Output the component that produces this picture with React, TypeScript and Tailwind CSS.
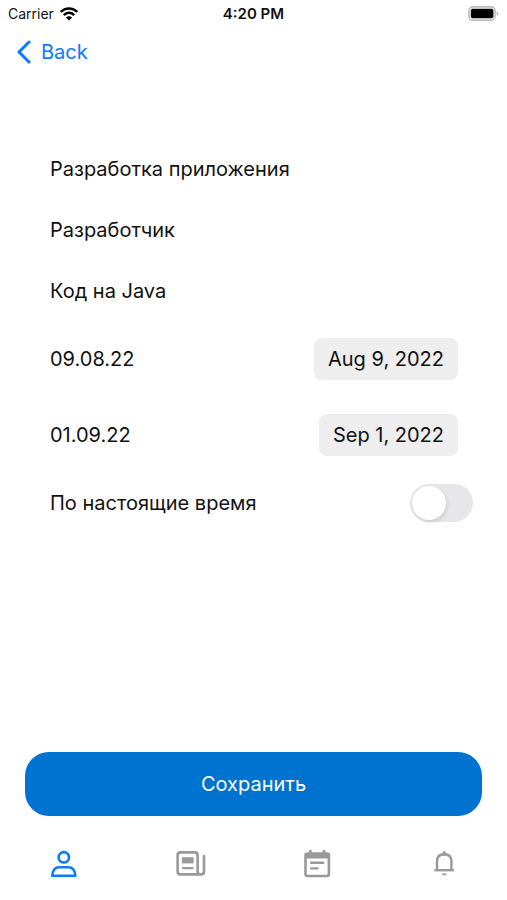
import { useState } from 'react'

type TabId = 'profile' | 'news' | 'calendar' | 'alerts'

interface TextFieldProps {
  label: string
  value: string
  onChange: (value: string) => void
}

interface DateRowProps {
  id: string
  value: string
  pickerLabel: string
}

const tabs: { id: TabId; label: string }[] = [
  { id: 'profile', label: 'Профиль' },
  { id: 'news', label: 'Новости' },
  { id: 'calendar', label: 'Календарь' },
  { id: 'alerts', label: 'Уведомления' },
]

function WifiIcon() {
  return (
    <svg width="18" height="14" viewBox="0 0 18 14" fill="none" stroke="#000" strokeWidth="2.5" aria-hidden="true">
      <path d="M0.8 4.9C5.2 0.2 12.8 0.2 17.2 4.9" />
      <path d="M3.8 8.1C6.6 5.1 11.4 5.1 14.2 8.1" />
      <path d="M9 13.6L5.9 10.5C7.6 8.8 10.4 8.8 12.1 10.5Z" fill="#000" stroke="none" />
    </svg>
  )
}

function BatteryIcon() {
  return (
    <svg width="31" height="15" viewBox="0 0 31 15" aria-hidden="true">
      <rect x="0.9" y="0.9" width="26.2" height="13.2" rx="4" fill="#fff" stroke="#bdbdbd" strokeWidth="1.6" />
      <rect x="2.8" y="2.8" width="22.6" height="9.4" rx="1.8" fill="#000" />
      <path d="M28.7 5.2C30.9 6 30.9 9 28.7 9.8Z" fill="#bdbdbd" />
    </svg>
  )
}

function TabIcon({ id }: { id: TabId }) {
  const common = {
    width: 32,
    height: 32,
    viewBox: '0 0 32 32',
    fill: 'none',
    stroke: 'currentColor',
    strokeWidth: 2.6,
    'aria-hidden': true,
  } as const

  switch (id) {
    case 'profile':
      return (
        <svg {...common} strokeLinejoin="round">
          <circle cx="16.8" cy="9.3" r="5.2" />
          <path d="M5.2 27.7C5.8 21.6 8 19.2 12 19.2H21.6C25.6 19.2 27.8 21.6 28.4 27.7Z" />
        </svg>
      )
    case 'news':
      return (
        <svg {...common} strokeLinejoin="round" strokeLinecap="round">
          <path d="M27 26.4H6.4C4.4 26.4 3.6 25.6 3.6 23.6V7.2C3.6 5.2 4.4 4.4 6.4 4.4H20.8C22.8 4.4 23.6 5.2 23.6 7.2V23.4C23.6 25.4 24.8 26.4 26.8 26.4C29 26.4 30 25.4 30 23.4V8" />
          <rect x="8" y="9.2" width="11.6" height="6.2" fill="currentColor" stroke="none" />
          <path d="M9 20.2H18.6" strokeWidth="2.2" />
        </svg>
      )
    case 'calendar':
      return (
        <svg {...common}>
          <rect x="4.5" y="5.6" width="23.4" height="22.4" rx="2" />
          <path d="M4 8H28.4" strokeWidth="5" />
          <path d="M9.4 2V6M23 2V6" />
          <path d="M9.2 14.8H23.2M9.2 20.4H17.6" strokeWidth="2.4" />
        </svg>
      )
    case 'alerts':
      return (
        <svg {...common} strokeWidth="2.4">
          <path d="M6.4 22.2H26" />
          <path d="M9 22.2V13.4C9 8.6 12 6.2 16.2 6.2C20.4 6.2 23.4 8.6 23.4 13.4V22.2" />
          <path d="M16.2 4.4V6.2" strokeWidth="3" strokeLinecap="round" />
          <path d="M13.6 25.6H18.8C18.2 28 14.2 28 13.6 25.6Z" fill="currentColor" stroke="none" />
        </svg>
      )
  }
}

function TextField({ label, value, onChange }: TextFieldProps) {
  return (
    <input
      type="text"
      aria-label={label}
      value={value}
      onChange={(e) => onChange(e.target.value)}
      className="h-[61px] w-full bg-transparent outline-none"
    />
  )
}

function DateRow({ id, value, pickerLabel }: DateRowProps) {
  return (
    <div className="flex h-[76px] items-center justify-between pr-[15px]">
      <label htmlFor={id}>{value}</label>
      <button id={id} type="button" className="h-[42px] rounded-lg bg-[#eeeeef] px-[14px]">
        {pickerLabel}
      </button>
    </div>
  )
}

export default function App() {
  const [title, setTitle] = useState('Разработка приложения')
  const [position, setPosition] = useState('Разработчик')
  const [description, setDescription] = useState('Код на Java')
  const [isCurrent, setIsCurrent] = useState(false)
  const [activeTab, setActiveTab] = useState<TabId>('profile')

  return (
    <div className="flex min-h-screen flex-col bg-white font-['Inter','Noto_Sans',sans-serif] text-xl text-[#111111]">
      <div className="grid h-[27px] grid-cols-3 items-center px-2 text-[14px]">
        <div className="flex items-center gap-[6px]">
          <span>Carrier</span>
          <WifiIcon />
        </div>
        <span className="text-center text-[15px] font-semibold">4:20 PM</span>
        <div className="flex justify-end">
          <BatteryIcon />
        </div>
      </div>

      <header className="flex h-[50px] items-center px-4">
        <button type="button" className="flex items-center gap-[9px] text-[#0a7aff]">
          <svg width="16" height="24" viewBox="0 0 16 24" fill="none" stroke="currentColor" strokeWidth="3" strokeLinecap="round" strokeLinejoin="round" aria-hidden="true">
            <path d="M13 2L3 12L13 22" />
          </svg>
          Back
        </button>
      </header>

      <form className="flex flex-1 flex-col" onSubmit={(e) => e.preventDefault()}>
        <div className="flex flex-col pt-[61px] pr-[34px] pl-[50px]">
          <TextField label="Название" value={title} onChange={setTitle} />
          <TextField label="Должность" value={position} onChange={setPosition} />
          <TextField label="Описание" value={description} onChange={setDescription} />
          <DateRow id="start-date" value="09.08.22" pickerLabel="Aug 9, 2022" />
          <DateRow id="end-date" value="01.09.22" pickerLabel="Sep 1, 2022" />
          <label className="flex h-[60px] items-center justify-between">
            По настоящие время
            <input
              type="checkbox"
              role="switch"
              checked={isCurrent}
              onChange={(e) => setIsCurrent(e.target.checked)}
              className="flex h-[38px] w-[63px] appearance-none items-center rounded-full bg-[#e7e7e9] p-[2px] before:size-[34px] before:rounded-full before:bg-white before:shadow-[1px_2px_4px_rgba(0,0,0,0.12)] before:content-[''] checked:justify-end checked:bg-[#34c759]"
            />
          </label>
        </div>

        <div className="mt-auto px-[25px] pt-6">
          <button type="submit" className="h-16 w-full rounded-3xl bg-[#0072d0] text-white">
            Сохранить
          </button>
        </div>
      </form>

      <nav className="mt-3 grid h-[72px] grid-cols-4">
        {tabs.map((tab) => (
          <button
            key={tab.id}
            type="button"
            aria-label={tab.label}
            onClick={() => setActiveTab(tab.id)}
            className={`flex items-center justify-center ${activeTab === tab.id ? 'text-[#0a7aff]' : 'text-[#999999]'}`}
          >
            <TabIcon id={tab.id} />
          </button>
        ))}
      </nav>
    </div>
  )
}
